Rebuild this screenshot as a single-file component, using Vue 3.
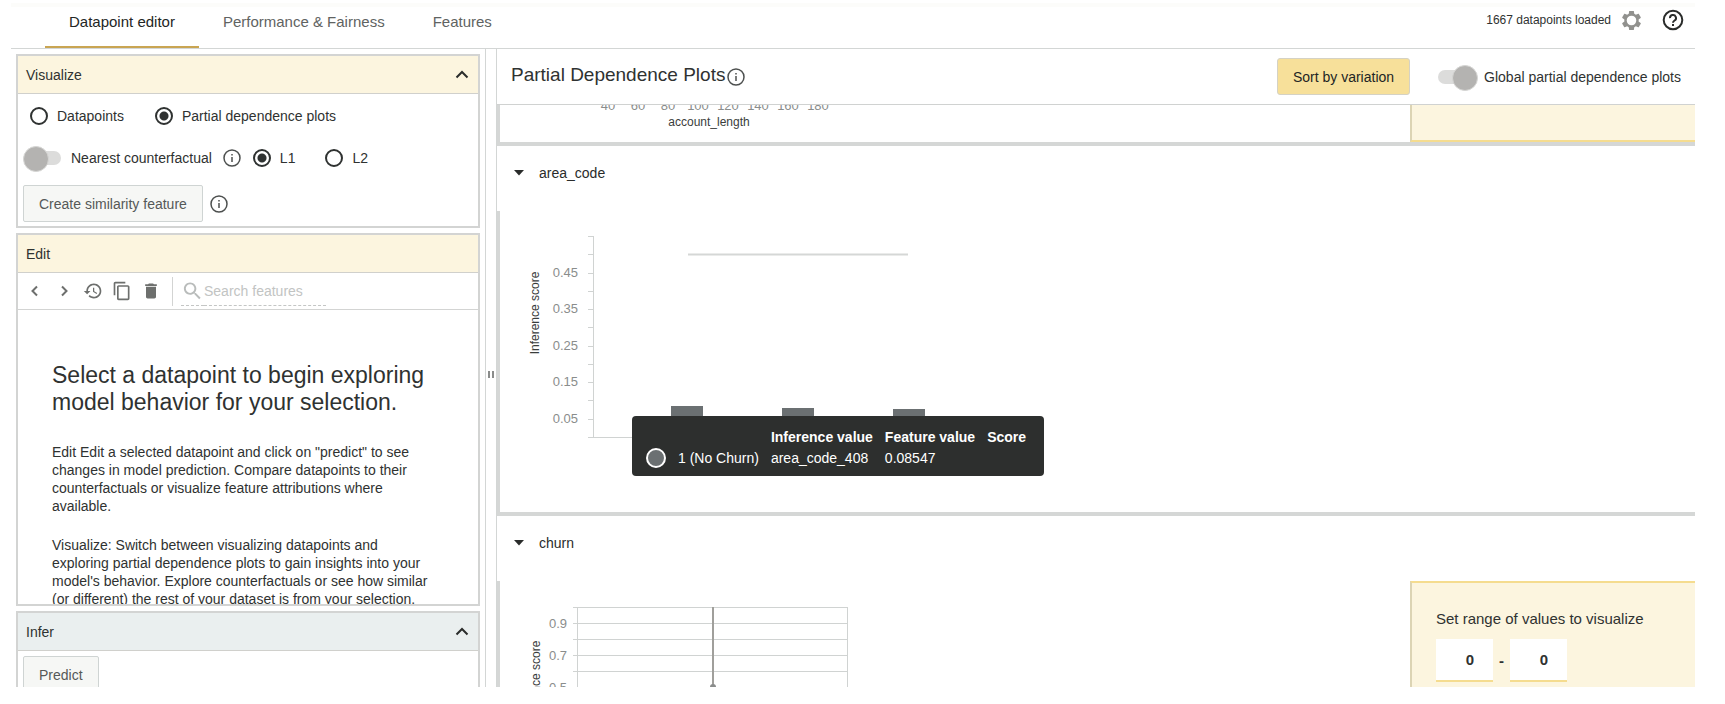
<script setup>
import { ref } from 'vue'

const tabs = ['Datapoint editor', 'Performance & Fairness', 'Features']
const activeTab = ref(tabs[0])
const view = ref('pdp')
const distance = ref('L1')
const nearest = ref(false)
const globalPlots = ref(true)
const search = ref('')
const rangeMin = ref('0')
const rangeMax = ref('0')

const lengthTicks = [40, 60, 80, 100, 120, 140, 160, 180].map((value, i) => ({ value, x: 108 + i * 30 }))

const areaTicks = Array.from({ length: 12 }, (_, i) => 25 + Math.round((i * 201) / 11))
const areaLabels = ['0.45', '0.35', '0.25', '0.15', '0.05'].map((text, i) => ({ text, y: areaTicks[2 + i * 2] + 4 }))
const areaBars = [
  { x: 171, top: 195 },
  { x: 282, top: 197 },
  { x: 393, top: 198 },
]

const churnLines = [26, 42, 58, 74, 90, 106]
const churnLabels = [
  { text: '0.9', y: 47 },
  { text: '0.7', y: 79 },
  { text: '0.5', y: 111 },
]
</script>

<template>
  <div class="page">
    <header class="topbar">
      <nav class="tabs">
        <button
          v-for="tab in tabs"
          :key="tab"
          type="button"
          class="tab"
          :class="{ active: tab === activeTab }"
          @click="activeTab = tab"
        >{{ tab }}</button>
      </nav>
      <div class="status">
        <span>1667 datapoints loaded</span>
        <button type="button" class="icon-btn gear" aria-label="Settings">
          <svg width="23" height="23" viewBox="0 0 24 24" fill="currentColor" fill-rule="evenodd">
            <path d="M19.43 12.98c.04-.32.07-.64.07-.98s-.03-.66-.07-.98l2.11-1.65c.19-.15.24-.42.12-.64l-2-3.46c-.12-.22-.39-.3-.61-.22l-2.49 1c-.52-.4-1.08-.73-1.69-.98l-.38-2.65C14.46 2.18 14.25 2 14 2h-4c-.25 0-.46.18-.49.42l-.38 2.65c-.61.25-1.17.59-1.69.98l-2.49-1c-.23-.09-.49 0-.61.22l-2 3.46c-.13.22-.07.49.12.64l2.11 1.65c-.04.32-.07.65-.07.98s.03.66.07.98l-2.11 1.65c-.19.15-.24.42-.12.64l2 3.46c.12.22.39.3.61.22l2.49-1c.52.4 1.08.73 1.69.98l.38 2.65c.03.24.24.42.49.42h4c.25 0 .46-.18.49-.42l.38-2.65c.61-.25 1.17-.59 1.69-.98l2.49 1c.23.09.49 0 .61-.22l2-3.46c.12-.22.07-.49-.12-.64l-2.11-1.65zM12 17a5 5 0 1 1 0-10a5 5 0 0 1 0 10z" />
          </svg>
        </button>
        <button type="button" class="icon-btn help" aria-label="Help">
          <svg width="22" height="22" viewBox="0 0 22 22" fill="none" stroke="currentColor" stroke-width="2">
            <circle cx="11" cy="11" r="9.3" />
            <path d="M8 9.2a3 3 0 1 1 4.6 2.3c-1 .7-1.6 1.100-1.6 2.300" />
            <path d="M11 15v2" />
          </svg>
        </button>
      </div>
    </header>

    <main class="workspace">
      <aside class="left">
        <section class="panel">
          <button type="button" class="panel-head">
            <span>Visualize</span>
            <svg width="14" height="10" viewBox="0 0 14 10" fill="none" stroke="#2b2d2c" stroke-width="2"><path d="M1.500 7.500L7 2L12.500 7.500" /></svg>
          </button>
          <div class="visualize">
            <div class="row">
              <label class="radio first"><input v-model="view" type="radio" name="view" value="points">Datapoints</label>
              <label class="radio"><input v-model="view" type="radio" name="view" value="pdp">Partial dependence plots</label>
            </div>
            <div class="row tight">
              <label class="toggle"><input v-model="nearest" type="checkbox">Nearest counterfactual</label>
              <svg class="info" width="18" height="18" viewBox="0 0 18 18"><circle cx="9" cy="9" r="8" /><path d="M9 8v5M9 5v1.500" /></svg>
              <label class="radio l1"><input v-model="distance" type="radio" name="distance" value="L1">L1</label>
              <label class="radio"><input v-model="distance" type="radio" name="distance" value="L2">L2</label>
            </div>
            <div class="row similarity">
              <button type="button" class="btn">Create similarity feature</button>
              <svg class="info" width="18" height="18" viewBox="0 0 18 18"><circle cx="9" cy="9" r="8" /><path d="M9 8v5M9 5v1.500" /></svg>
            </div>
          </div>
        </section>

        <section class="panel edit">
          <h2 class="panel-head">Edit</h2>
          <div class="toolbar">
            <button type="button" class="icon-btn tool" aria-label="Previous">
              <svg width="20" height="20" viewBox="0 0 20 20" fill="none" stroke="currentColor" stroke-width="2"><path d="M12 5.500L7.500 10L12 14.500" /></svg>
            </button>
            <button type="button" class="icon-btn tool" aria-label="Next">
              <svg width="20" height="20" viewBox="0 0 20 20" fill="none" stroke="currentColor" stroke-width="2"><path d="M8 5.500L12.500 10L8 14.500" /></svg>
            </button>
            <button type="button" class="icon-btn tool" aria-label="Revert">
              <svg width="20" height="20" viewBox="0 0 24 24" fill="currentColor"><path d="M13 3c-4.970 0-9 4.030-9 9H1l3.890 3.890.07.14L9 12H6c0-3.870 3.130-7 7-7s7 3.130 7 7-3.130 7-7 7c-1.930 0-3.680-.79-4.940-2.060l-1.420 1.420C8.270 19.990 10.510 21 13 21c4.970 0 9-4.030 9-9s-4.030-9-9-9zm-1 5v5l4.280 2.540.72-1.210-3.500-2.080V8H12z" /></svg>
            </button>
            <button type="button" class="icon-btn tool" aria-label="Duplicate">
              <svg width="20" height="20" viewBox="0 0 24 24" fill="currentColor"><path d="M16 1H4c-1.100 0-2 .9-2 2v14h2V3h12V1zm3 4H8c-1.100 0-2 .9-2 2v14c0 1.100.9 2 2 2h11c1.100 0 2-.9 2-2V7c0-1.100-.9-2-2-2zm0 16H8V7h11v14z" /></svg>
            </button>
            <button type="button" class="icon-btn tool" aria-label="Delete">
              <svg width="20" height="20" viewBox="0 0 24 24" fill="currentColor"><path d="M6 19c0 1.100.9 2 2 2h8c1.100 0 2-.9 2-2V7H6v12zM19 4h-3.500l-1-1h-5l-1 1H5v2h14V4z" /></svg>
            </button>
            <label class="search">
              <svg width="23" height="23" viewBox="0 0 24 24" fill="currentColor"><path d="M15.500 14h-.79l-.28-.27C15.410 12.590 16 11.110 16 9.500 16 5.910 13.090 3 9.500 3S3 5.910 3 9.500 5.910 16 9.500 16c1.610 0 3.090-.59 4.230-1.570l.27.28v.79l5 4.990L20.490 19l-4.990-5zm-6 0C7.010 14 5 11.990 5 9.500S7.010 5 9.500 5 14 7.010 14 9.500 11.990 14 9.500 14z" /></svg>
              <input v-model="search" type="text" placeholder="Search features" aria-label="Search features">
            </label>
          </div>
          <div class="intro">
            <h1>Select a datapoint to begin exploring<br>model behavior for your selection.</h1>
            <p>Edit Edit a selected datapoint and click on "predict" to see<br>changes in model prediction. Compare datapoints to their<br>counterfactuals or visualize feature attributions where<br>available.</p>
            <p>Visualize: Switch between visualizing datapoints and<br>exploring partial dependence plots to gain insights into your<br>model's behavior. Explore counterfactuals or see how similar<br>(or different) the rest of your dataset is from your selection.</p>
          </div>
        </section>

        <section class="panel infer">
          <button type="button" class="panel-head">
            <span>Infer</span>
            <svg width="14" height="10" viewBox="0 0 14 10" fill="none" stroke="#2b2d2c" stroke-width="2"><path d="M1.500 7.500L7 2L12.500 7.500" /></svg>
          </button>
          <div class="infer-body">
            <button type="button" class="btn">Predict</button>
          </div>
        </section>
      </aside>

      <div class="splitter"><span class="grip"></span></div>

      <section class="right">
        <div class="plots-head">
          <h2>Partial Dependence Plots</h2>
          <svg class="info" width="18" height="18" viewBox="0 0 18 18"><circle cx="9" cy="9" r="8" /><path d="M9 8v5M9 5v1.500" /></svg>
          <button type="button" class="sort">Sort by variation</button>
          <label class="toggle"><input v-model="globalPlots" type="checkbox">Global partial dependence plots</label>
        </div>

        <div class="plots">
          <div class="plot-body length">
            <svg class="chart" height="37">
              <g class="tick-text middle">
                <text v-for="t in lengthTicks" :key="t.value" :x="t.x" y="5">{{ t.value }}</text>
              </g>
              <text class="axis-text middle" x="209" y="21">account_length</text>
            </svg>
            <div class="range"></div>
          </div>

          <button type="button" class="plot-title">
            <svg width="10" height="6" viewBox="0 0 10 6" fill="currentColor"><path d="M0 0h10L5 5.500z" /></svg>area_code
          </button>
          <div class="plot-body area">
            <div class="chart-box">
              <svg class="chart" height="301">
                <path class="axis" d="M93.500 25V226.500M88 226.500H482" />
                <path v-for="y in areaTicks" :key="y" class="axis" :d="`M88 ${y}.5h6`" />
                <g class="tick-text end">
                  <text v-for="l in areaLabels" :key="l.text" x="78" :y="l.y">{{ l.text }}</text>
                </g>
                <text class="axis-text middle" transform="translate(39 102) rotate(-90)">Inference score</text>
                <path d="M188 43.500H408" stroke="#d5d7d6" stroke-width="2" />
                <rect v-for="b in areaBars" :key="b.x" :x="b.x" :y="b.top" width="32" :height="226 - b.top" fill="#6b7072" />
              </svg>
              <table class="tooltip">
                <thead>
                  <tr><th></th><th></th><th>Inference value</th><th>Feature value</th><th>Score</th></tr>
                </thead>
                <tbody>
                  <tr><td><span class="swatch"></span></td><td>1 (No Churn)</td><td>area_code_408</td><td>0.08547</td><td></td></tr>
                </tbody>
              </table>
            </div>
          </div>

          <button type="button" class="plot-title">
            <svg width="10" height="6" viewBox="0 0 10 6" fill="currentColor"><path d="M0 0h10L5 5.500z" /></svg>churn
          </button>
          <div class="plot-body churn">
            <svg class="chart" height="301">
              <path v-for="y in churnLines" :key="y" class="axis" :d="`M73 ${y}.5H348`" />
              <path class="axis" d="M77.500 26V190M347.500 26V190" />
              <path d="M213 26V190" stroke="#a09f9b" stroke-width="2" />
              <circle cx="213" cy="106" r="3" fill="#8b8d8c" />
              <g class="tick-text end">
                <text v-for="l in churnLabels" :key="l.text" x="67" :y="l.y">{{ l.text }}</text>
              </g>
              <text class="axis-text middle" transform="translate(40 101) rotate(-90)">Inference score</text>
            </svg>
            <div class="range form">
              <span>Set range of values to visualize</span>
              <div class="inputs">
                <input v-model="rangeMin" type="text" inputmode="numeric" aria-label="Minimum">
                <b>-</b>
                <input v-model="rangeMax" type="text" inputmode="numeric" aria-label="Maximum">
              </div>
            </div>
          </div>
        </div>
      </section>
    </main>
  </div>
</template>

<style>
body {
  margin: 0;
  background: #fff;
}
</style>

<style scoped>
* {
  box-sizing: border-box;
}

.page {
  display: flex;
  flex-direction: column;
  height: 100vh;
  padding: 3px 30px 17px 11px;
  overflow: hidden;
  font-family: "Liberation Sans", Arial, sans-serif;
  font-size: 14px;
  color: #2f3231;
}

button,
input {
  margin: 0;
  font: inherit;
  color: inherit;
}

button {
  cursor: pointer;
}

h1,
h2,
p {
  margin: 0;
  font-weight: 400;
}

/* top bar */
.topbar {
  display: flex;
  flex: none;
  justify-content: space-between;
  height: 46px;
  border-top: 4px solid #fcfcfa;
  border-bottom: 1px solid #d3d6d5;
}

.tabs {
  display: flex;
  padding-left: 34px;
}

.tab {
  padding: 0 24px 11px;
  border: 0;
  border-bottom: 2px solid transparent;
  background: none;
  font-size: 15px;
  color: #5f6362;
}

.tab.active {
  border-bottom-color: #c9a552;
  color: #232625;
}

.status {
  display: flex;
  align-items: center;
  height: 26px;
  padding-right: 11px;
  font-size: 12px;
}

.icon-btn {
  display: flex;
  padding: 0;
  border: 0;
  background: none;
}

.gear {
  margin-left: 9px;
  color: #91918e;
}

.help {
  margin-left: 19px;
  color: #2a2c2b;
}

/* workspace */
.workspace {
  display: flex;
  flex: 1;
  min-height: 0;
}

.left {
  display: flex;
  flex: 0 0 474px;
  flex-direction: column;
  gap: 5px;
  padding: 5px 5px 0;
}

.panel {
  flex: none;
  border: 2px solid #d3d4d3;
  overflow: hidden;
}

.panel-head {
  display: flex;
  align-items: center;
  justify-content: space-between;
  width: 100%;
  height: 38px;
  padding: 0 9px 0 8px;
  border: 0;
  border-bottom: 1px solid #d0d0cc;
  background: #fcf5df;
  font-size: 14px;
}

.visualize {
  padding: 11px 0 4px 5px;
}

.row {
  display: flex;
  align-items: center;
  height: 22px;
}

.row.tight {
  margin-top: 20px;
}

.row.similarity {
  height: 37px;
  margin-top: 16px;
  gap: 7px;
}

.radio {
  display: flex;
  align-items: center;
  gap: 9px;
}

.radio input {
  width: 18px;
  height: 18px;
  border: 2px solid #2f3231;
  border-radius: 50%;
  background: #fff;
  appearance: none;
}

.radio input:checked {
  background: radial-gradient(circle, #2f3231 4px, #fff 5px);
}

.radio.first {
  margin: 0 31px 0 7px;
}

.radio.l1 {
  margin: 0 30px 0 12px;
}

.toggle {
  display: flex;
  align-items: center;
}

.toggle input {
  width: 36px;
  height: 14px;
  margin: 0 10px 0 2px;
  border-radius: 7px;
  background: #dcdcdb;
  appearance: none;
}

.toggle input::after {
  display: block;
  width: 24px;
  height: 24px;
  margin: -5px 0 0 -2px;
  border: 1px solid #d6d6d4;
  border-radius: 50%;
  background: #b4b3b1;
  content: "";
}

.toggle input:checked::after {
  margin-left: 14px;
}

.info {
  flex: none;
  fill: none;
  stroke: #4d504f;
  stroke-width: 1.5;
}

.row.tight .info {
  margin-left: 11px;
}

.btn {
  height: 37px;
  padding: 0 15px;
  border: 1px solid #cfd4d3;
  border-radius: 2px;
  background: #f6f7f5;
  color: #555958;
}

.edit {
  display: flex;
  flex: 1;
  flex-direction: column;
  min-height: 0;
}

.edit .panel-head {
  flex: none;
}

.toolbar {
  display: flex;
  flex: none;
  align-items: center;
  gap: 9px;
  height: 37px;
  padding-left: 7px;
  border-bottom: 1px solid #d3d4d3;
}

.tool {
  color: #6d6f6d;
}

.search {
  display: flex;
  align-items: center;
  height: 29px;
  margin-left: 2px;
  padding-left: 8px;
  border-left: 1px solid #d3d4d3;
  color: #b9bcbb;
}

.search input {
  width: 122px;
  height: 29px;
  padding: 0;
  border: 0;
  border-bottom: 1px dashed #c4c6c5;
  outline: 0;
  background: none;
}

.search svg {
  height: 29px;
  border-bottom: 1px dashed #c4c6c5;
}

.search input::placeholder {
  color: #c2c4c3;
}

.intro {
  padding: 52px 0 0 34px;
  white-space: nowrap;
  line-height: 18px;
}

.intro h1 {
  font-size: 23px;
  line-height: 27px;
}

.intro p {
  margin-top: 27px;
}

.intro p + p {
  margin-top: 21px;
}

.infer {
  flex: 0 0 76px;
  border-bottom: 0;
}

.infer .panel-head {
  background: #eaefef;
}

.infer-body {
  padding: 5px;
}

/* splitter */
.splitter {
  display: flex;
  flex: 0 0 12px;
  align-items: center;
  justify-content: center;
  padding-top: 12px;
  border: solid #d3d6d5;
  border-width: 0 1px;
}

.grip {
  width: 6px;
  height: 7px;
  border: solid #8a8c8b;
  border-width: 0 2px;
}

/* plots */
.right {
  display: flex;
  flex: 1;
  flex-direction: column;
  min-width: 0;
}

.plots-head {
  display: flex;
  flex: none;
  align-items: center;
  height: 55px;
  padding: 0 14px;
  white-space: nowrap;
}

.plots-head h2 {
  margin-right: 2px;
  padding-bottom: 4px;
  font-size: 19px;
}

.sort {
  height: 37px;
  margin-right: 26px;
  margin-left: auto;
  padding: 0 15px;
  border: 1px solid #d5d2c4;
  border-radius: 3px;
  background: #f7e09a;
  color: #222524;
}

.plots {
  flex: 1;
  min-height: 0;
  border-top: 1px solid #d0d2d1;
  overflow: hidden;
}

.plot-body {
  display: grid;
  grid-template-columns: 1fr 285px;
  border-bottom: 4px solid #d5d7d6;
  border-left: 3px solid #d5d7d6;
}

.plot-body.area {
  grid-template-columns: 1fr;
}

.plot-title {
  display: flex;
  align-items: center;
  gap: 15px;
  width: 100%;
  height: 65px;
  padding: 0 0 12px 17px;
  border: 0;
  background: none;
  color: #2a2c2b;
}

.chart-box {
  position: relative;
}

.chart {
  display: block;
  width: 100%;
}

.axis {
  fill: none;
  stroke: #d0d3d2;
}

.tick-text {
  font-size: 13px;
  fill: #8a8d8c;
}

.axis-text {
  font-size: 12px;
  fill: #3a3d3c;
}

.middle {
  text-anchor: middle;
}

.end {
  text-anchor: end;
}

.tooltip {
  position: absolute;
  top: 205px;
  left: 132px;
  padding: 10px 6px 8px 14px;
  border-radius: 4px;
  border-spacing: 0;
  background: #2d2f2e;
  color: #fff;
  text-align: left;
  white-space: nowrap;
}

.tooltip th,
.tooltip td {
  height: 21px;
  padding: 0 12px 0 0;
  line-height: 18px;
}

.swatch {
  display: block;
  width: 20px;
  height: 20px;
  border: 2px solid #fff;
  border-radius: 50%;
  background: #6b7072;
}

.range {
  border-bottom: 2px solid #f5dc8f;
  border-left: 2px solid #dcd4b4;
  background: #fcf5df;
}

.range.form {
  padding: 27px 0 0 24px;
  border-top: 2px solid #f5dc8f;
  border-bottom: 0;
  font-size: 15px;
}

.inputs {
  display: flex;
  align-items: center;
  gap: 6px;
  margin-top: 12px;
}

.inputs input {
  width: 57px;
  height: 43px;
  padding: 0 19px 0 0;
  border: 0;
  border-bottom: 2px solid #f5dc8f;
  background: #fff;
  text-align: right;
  font-weight: 700;
}
</style>
